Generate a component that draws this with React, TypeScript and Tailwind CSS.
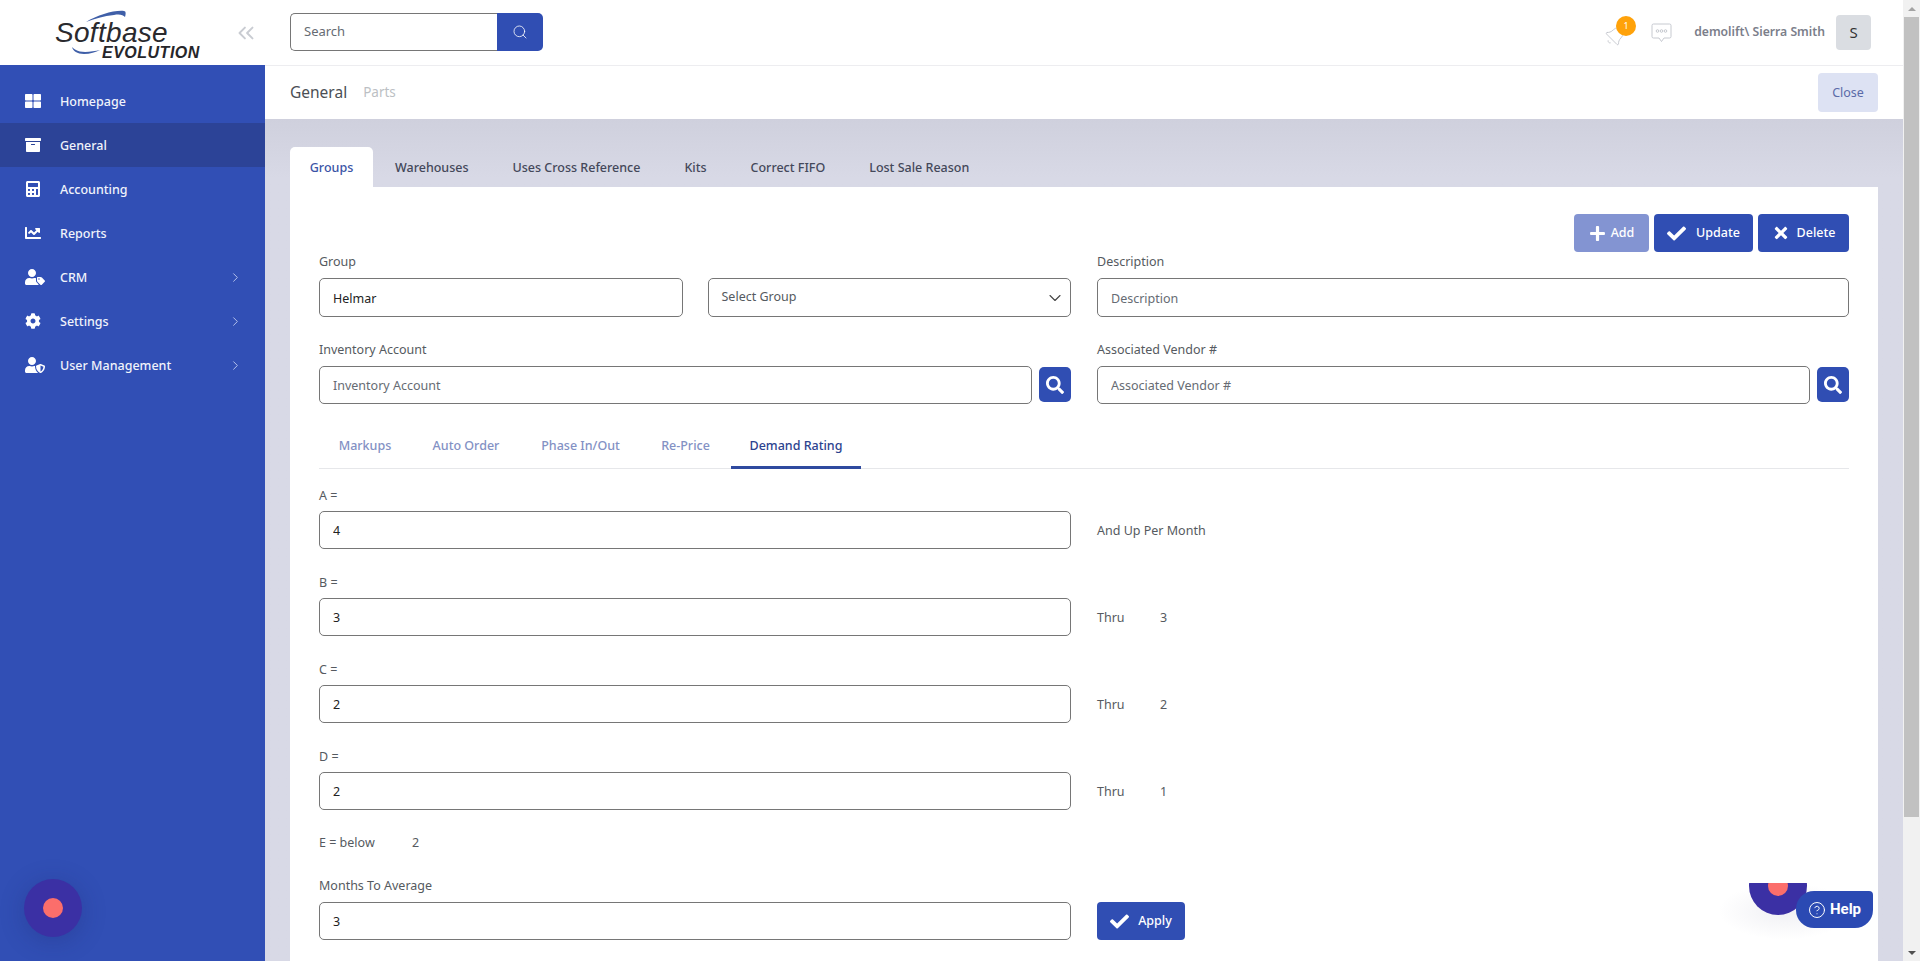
import React from "react";
import { FaThLarge, FaArchive, FaCalculator, FaChartLine, FaUserTag, FaCog, FaUserShield, FaPlus, FaCheck, FaTimes, FaSearch } from "react-icons/fa";
import { ChevronRight, ChevronsLeft, ChevronDown, Search, Bell, HelpCircle } from "lucide-react";

const FONT = "font-['Noto_Sans','Open_Sans',sans-serif]";

const NAV = [
  { label: "Homepage", icon: FaThLarge },
  { label: "General", icon: FaArchive, active: true },
  { label: "Accounting", icon: FaCalculator },
  { label: "Reports", icon: FaChartLine },
  { label: "CRM", icon: FaUserTag, arrow: true },
  { label: "Settings", icon: FaCog, arrow: true },
  { label: "User Management", icon: FaUserShield, arrow: true },
];

function Logo() {
  return (
    <div className="relative w-[150px] h-[65px] ml-[54px]">
      <svg className="absolute left-0 top-[7px]" width="150" height="58" viewBox="0 0 150 58">
        <path d="M32 15 C44 8 60 3 70 4 C72 4 72 7 71 10 C69 8 66 7 60 8 C50 9 40 12 32 15 Z" fill="#3f5fa8" />
        <path d="M18 40 C19 44 23 47 30 47 C36 47 42 45 46 43 C38 45 26 46 22 43 C20 42 19 41 18 40 Z" fill="#3f5fa8" />
      </svg>
      <span className="absolute left-[1px] top-[21px] font-['Liberation_Sans',sans-serif] italic text-[28px] leading-[24px] tracking-[0.3px] text-[#2a2a2e]">Softbase</span>
      <span className="absolute left-[48px] top-[45px] font-['Liberation_Sans',sans-serif] italic font-bold text-[16px] leading-[16px] tracking-[0.5px] text-[#26262a]">EVOLUTION</span>
    </div>
  );
}

function Sidebar() {
  return (
    <aside className="w-[265px] h-full flex flex-col shrink-0">
      <div className="h-[65px] bg-white flex justify-between shrink-0">
        <Logo />
        <ChevronsLeft className="mt-[20px] mr-[6px] text-[#c9ccd2]" size={26} strokeWidth={1.8} />
      </div>
      <nav className="relative flex-1 bg-[#314fb5] pt-[14px]">
        {NAV.map((n) => {
          const Icon = n.icon;
          return (
            <div key={n.label} className={`h-[44px] flex items-center pl-[25px] pr-[22px] text-white ${n.active ? "bg-[#2c4397]" : ""}`}>
              <span className="w-[35px] shrink-0"><Icon size={n.label === "CRM" || n.label === "User Management" ? 20 : 16} /></span>
              <span className="flex-1 text-[12.5px] font-medium text-[#f0f3fb] pt-[2px]">{n.label}</span>
              {n.arrow && <ChevronRight size={15} strokeWidth={1.5} className="text-[#bcc7ee]" />}
            </div>
          );
        })}
        <div className="absolute left-[24px] top-[814px] w-[58px] h-[58px] rounded-full bg-[#3b30a4] shadow-[0_4px_24px_rgba(30,40,110,0.3)] flex items-center justify-center">
          <span className="w-[20px] h-[20px] rounded-full bg-[#fb6e6b]" />
        </div>
      </nav>
    </aside>
  );
}

function MessageIcon() {
  return (
    <svg width="21" height="20" viewBox="0 0 21 20" fill="none" stroke="#b9bcc4" strokeWidth="0.8">
      <path d="M2.5 1h16a1.5 1.5 0 0 1 1.5 1.5v11a1.5 1.5 0 0 1-1.5 1.5h-5.5l-2.5 3.5-2.500-3.500h-5.500a1.500 1.500 0 0 1-1.500-1.500v-11a1.500 1.500 0 0 1 1.500-1.500z" />
      <circle cx="6.500" cy="8" r="1.300" />
      <circle cx="10.500" cy="8" r="1.300" />
      <circle cx="14.500" cy="8" r="1.300" />
    </svg>
  );
}

function TopBar() {
  return (
    <header className="h-[66px] bg-white border-b border-[#ededf0] flex items-center justify-between pl-[25px] pr-[32px] shrink-0">
      <div className="flex h-[38px] w-[253px] -mt-[2px]">
        <div className="flex-1 border border-[#767676] border-r-0 rounded-l-[5px] flex items-center pl-[13px] pt-[1px] text-[13px] text-[#666b73]">Search</div>
        <div className="w-[46px] bg-[#304eb3] rounded-r-[5px] flex items-center justify-center">
          <Search size={16} strokeWidth={1.2} className="text-white" />
        </div>
      </div>
      <div className="flex items-center">
        <div className="relative mr-[27px] w-[20px] h-[20px] mt-[4px]">
          <Bell size={22} strokeWidth={0.8} className="text-[#b9bcc4] rotate-[45deg]" />
          <span className="absolute left-[12px] top-[-9px] w-[20px] h-[20px] rounded-full bg-[#ffa20a] text-white text-[9px] leading-[20px] text-center">1</span>
        </div>
        <div className="mr-[22px] h-[20px]"><MessageIcon /></div>
        <span className="text-[12.2px] font-semibold text-[#7b7e8a] mr-[11px]">demolift\ Sierra Smith</span>
        <div className="w-[35px] h-[35px] rounded-[4px] bg-[#dadde2] flex items-center justify-center text-[15px] text-[#333]">S</div>
      </div>
    </header>
  );
}

function SubBar() {
  return (
    <div className="h-[53px] bg-white flex items-center justify-between pl-[25px] pr-[25px] shrink-0">
      <div className="flex items-center">
        <span className="text-[15.5px] text-[#4b4f55] mr-[16px]">General</span>
        <span className="text-[13.5px] text-[#bcbfc4]">Parts</span>
      </div>
      <div className="w-[60px] h-[39px] pt-[1px] rounded-[4px] bg-[#dde2f3] flex items-center justify-center text-[12.5px] text-[#5a6aa8]">Close</div>
    </div>
  );
}

function Label({ children }: { children: React.ReactNode }) {
  return <div className="h-[18px] leading-[19px] text-[12.5px] text-[#555a60]">{children}</div>;
}

function Field({ value, placeholder, h = "h-[38px]" }: { value?: string; placeholder?: string; h?: string }) {
  return (
    <input
      readOnly
      defaultValue={value}
      placeholder={placeholder}
      className={`block w-full ${h} border border-[#767676] rounded-[5px] bg-white pl-[13px] pt-[1px] text-[12.5px] text-[#222] placeholder:text-[#666b73] outline-none`}
    />
  );
}

function SearchBtn() {
  return (
    <div className="w-[32px] h-[35px] shrink-0 rounded-[5px] bg-[#304eb3] flex items-center justify-center text-white mt-[1px] self-start">
      <FaSearch size={18} />
    </div>
  );
}

function RatingRow({ label, value, side, last }: { label: string; value: string; side: React.ReactNode; last?: boolean }) {
  return (
    <div className={last ? "mb-[23px]" : "mb-[24px]"}>
      <Label>{label}</Label>
      <div className="grid grid-cols-2 gap-x-[26px] mt-[7px] items-center">
        <Field value={value} />
        <div className="text-[12.5px] text-[#555a60] pt-[2px]">{side}</div>
      </div>
    </div>
  );
}

function Thru({ n }: { n: string }) {
  return (
    <div className="flex">
      <span className="w-[63px]">Thru</span>
      <span>{n}</span>
    </div>
  );
}

function Btn({ icon, label, className }: { icon: React.ReactNode; label: string; className: string }) {
  return (
    <div className={`h-[38px] rounded-[4px] flex items-center justify-center text-white text-[12.5px] font-medium ${className}`}>
      {icon}
      {label}
    </div>
  );
}

function Card() {
  return (
    <div className="bg-white px-[29px] pt-[27px] flex-1">
      <div className="flex justify-end gap-[5px]">
        <Btn icon={<FaPlus size={17} className="mr-[5px]" />} label="Add" className="w-[75px] bg-[#8394d2]" />
        <Btn icon={<FaCheck size={19} className="mr-[10px]" />} label="Update" className="w-[99px] bg-[#304eb3]" />
        <Btn icon={<FaTimes size={18} className="mr-[7px]" />} label="Delete" className="w-[91px] bg-[#304eb3]" />
      </div>

      <div className="grid grid-cols-2 gap-x-[26px]">
        <div className="grid grid-cols-2 gap-x-[25px]">
          <div>
            <Label>Group</Label>
            <div className="mt-[8px]"><Field value="Helmar" h="h-[39px]" /></div>
          </div>
          <div className="pt-[26px]">
            <div className="h-[39px] border border-[#767676] rounded-[5px] flex items-center justify-between pl-[13px] pr-[5px] text-[12.5px] text-[#555a60]">
              <span className="pb-[1px]">Select Group</span>
              <ChevronDown size={20} strokeWidth={1.3} className="text-[#444]" />
            </div>
          </div>
        </div>
        <div>
          <Label>Description</Label>
          <div className="mt-[8px]"><Field placeholder="Description" h="h-[39px]" /></div>
        </div>
      </div>

      <div className="grid grid-cols-2 gap-x-[26px] mt-[23px]">
        <div>
          <Label>Inventory Account</Label>
          <div className="mt-[8px] flex items-start gap-[7px]">
            <Field placeholder="Inventory Account" />
            <SearchBtn />
          </div>
        </div>
        <div>
          <Label>Associated Vendor #</Label>
          <div className="mt-[8px] flex items-start gap-[7px]">
            <Field placeholder="Associated Vendor #" />
            <SearchBtn />
          </div>
        </div>
      </div>

      <div className="mt-[22px] h-[43px] border-b border-[#e6e7ea] flex text-[12.5px] font-medium text-[#8391c4]">
        <div className="w-[92px] h-[43px] flex items-center justify-center pb-[2px]">Markups</div>
        <div className="w-[110px] h-[43px] flex items-center justify-center pb-[2px]">Auto Order</div>
        <div className="w-[119px] h-[43px] flex items-center justify-center pb-[2px]">Phase In/Out</div>
        <div className="w-[91px] h-[43px] flex items-center justify-center pb-[2px]">Re-Price</div>
        <div className="w-[130px] h-[43px] flex items-center justify-center border-b-[3px] border-[#2f4a9f] text-[#2c438f]">Demand Rating</div>
      </div>

      <div className="mt-[17px]">
        <RatingRow label="A =" value="4" side="And Up Per Month" />
        <RatingRow label="B =" value="3" side={<Thru n="3" />} />
        <RatingRow label="C =" value="2" side={<Thru n="2" />} />
        <RatingRow label="D =" value="2" side={<Thru n="1" />} last />
        <div className="flex h-[18px] leading-[19px] text-[12.5px] text-[#555a60]">
          <span className="w-[93px]">E = below</span>
          <span>2</span>
        </div>
        <div className="mt-[25px]">
          <Label>Months To Average</Label>
          <div className="grid grid-cols-2 gap-x-[26px] mt-[8px] items-center">
            <Field value="3" />
            <Btn icon={<FaCheck size={19} className="mr-[9px]" />} label="Apply" className="w-[88px] bg-[#304eb3]" />
          </div>
        </div>
      </div>
    </div>
  );
}

function Tabs() {
  return (
    <div className="flex h-[40px] text-[12.5px] font-medium text-[#44485a] shrink-0">
      <div className="w-[83px] bg-white rounded-t-[5px] flex items-center justify-center text-[#3a54a6] pt-[2px]">Groups</div>
      {["Warehouses", "Uses Cross Reference", "Kits", "Correct FIFO", "Lost Sale Reason"].map((t) => (
        <div key={t} className="px-[22px] pt-[2px] flex items-center first:pl-[26px] first:pr-[21px]">{t}</div>
      ))}
    </div>
  );
}

function Floating() {
  return (
    <>
      <div className="absolute left-[1455px] top-[883px] w-[130px] h-[56px] overflow-hidden bg-[radial-gradient(ellipse_at_center,rgba(225,225,232,0.5),rgba(255,255,255,0)_72%)]">
        <div className="absolute left-[29px] top-[-26px] w-[58px] h-[58px] rounded-full bg-[#3b30a4] flex items-center justify-center">
          <span className="w-[20px] h-[20px] rounded-full bg-[#fb6e6b]" />
        </div>
      </div>
      <div className="absolute left-[1531px] top-[891px] w-[77px] h-[37px] rounded-tl-[18px] rounded-tr-[4px] rounded-br-[18px] rounded-bl-[18px] bg-[#2b4ab3] flex items-center justify-center gap-[4px] text-white font-['Roboto',sans-serif] font-bold text-[15px]">
        <HelpCircle size={18} strokeWidth={1.3} />
        Help
      </div>
    </>
  );
}

function Scrollbar() {
  return (
    <div className="w-[17px] h-full bg-[#f1f1f1] shrink-0 flex flex-col items-center">
      <div className="h-[17px] w-full flex items-center justify-center">
        <span className="w-0 h-0 border-x-[4px] border-x-transparent border-b-[4px] border-b-[#a3a3a3]" />
      </div>
      <div className="w-[15px] h-[800px] bg-[#c1c1c1]" />
      <div className="flex-1" />
      <div className="h-[17px] w-full flex items-center justify-center">
        <span className="w-0 h-0 border-x-[4px] border-x-transparent border-t-[4px] border-t-[#505050]" />
      </div>
    </div>
  );
}

export default function App() {
  return (
    <div className={`${FONT} flex w-[1920px] h-[961px] overflow-hidden bg-white`}>
      <Sidebar />
      <main className="relative flex-1 flex flex-col h-full overflow-hidden">
        <TopBar />
        <SubBar />
        <div className="flex-1 flex flex-col bg-gradient-to-b from-[#cfd0dd] to-[#d8d9e6] to-[7%] pl-[25px] pr-[25px] pt-[28px]">
          <Tabs />
          <Card />
        </div>
        <Floating />
      </main>
      <Scrollbar />
    </div>
  );
}
